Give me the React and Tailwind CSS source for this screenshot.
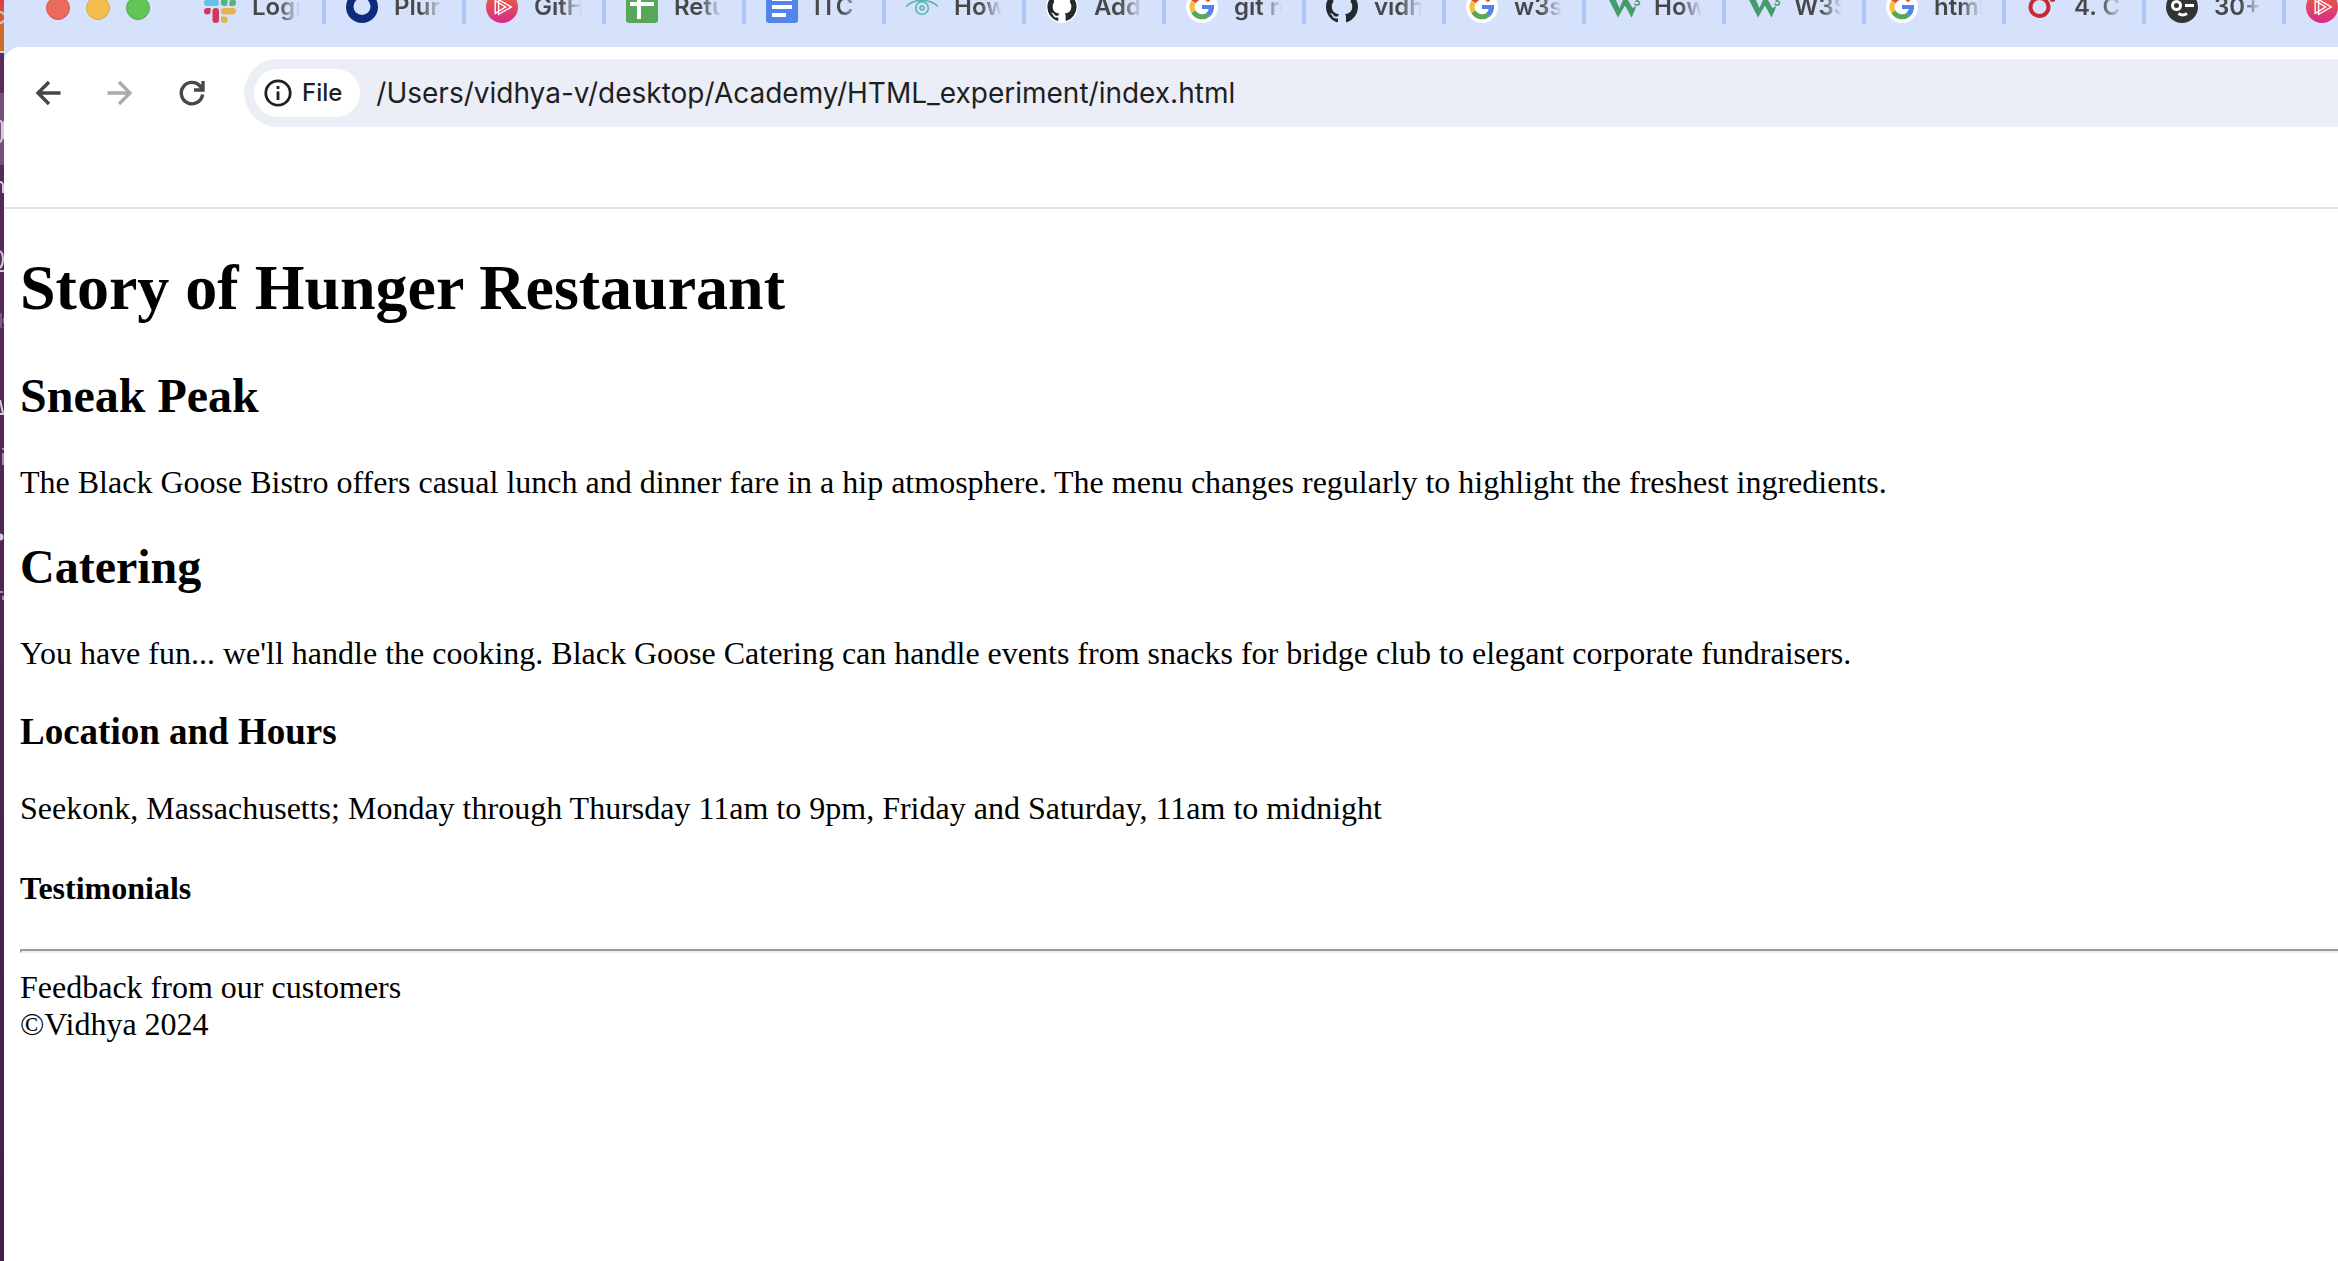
import React from "react";

const GOOGLE = (
  <svg viewBox="0 0 32 32" className="size-8">
    <circle cx="16" cy="16" r="16" fill="#fff" />
    <g fill="none" strokeWidth="5">
      <path d="M23.8 9.6A10 10 0 0 0 7.6 10.9" stroke="#dc4a3a" />
      <path d="M7.5 10.8A10 10 0 0 0 7.6 21.2" stroke="#f3be42" />
      <path d="M7.5 21A10 10 0 0 0 22.6 23.3" stroke="#58a65c" />
      <path d="M22.4 23.5A9.6 9.6 0 0 0 25.4 16" stroke="#5384ec" />
    </g>
    <path d="M16 14h12v4H16z" fill="#5384ec" />
  </svg>
);

const SLACK = (
  <svg viewBox="0 0 32 32" className="size-8">
    <g fill="#63c1ea"><rect x="0" y="8.5" width="15" height="6.5" rx="3.2" /><path d="M11.7 0A3.3 3.3 0 0 1 15 3.3v3.3h-3.3a3.3 3.3 0 0 1 0-6.6z" /></g>
    <g fill="#5ab080"><rect x="17" y="0" width="6.5" height="15" rx="3.2" /><path d="M32 11.7A3.3 3.3 0 0 1 28.7 15h-3.3v-3.3a3.3 3.3 0 0 1 6.6 0z" /></g>
    <g fill="#e3b34c"><rect x="17" y="17" width="15" height="6.5" rx="3.2" /><path d="M20.3 32a3.3 3.3 0 0 1-3.3-3.3v-3.3h3.3a3.3 3.3 0 0 1 0 6.6z" /></g>
    <g fill="#d1375d"><rect x="8.5" y="17" width="6.5" height="15" rx="3.2" /><path d="M0 20.3A3.3 3.3 0 0 1 3.3 17h3.3v3.3a3.3 3.3 0 0 1-6.6 0z" /></g>
  </svg>
);

const RING = (
  <svg viewBox="0 0 32 32" className="size-8">
    <circle cx="16" cy="16" r="16" fill="#0e2a7b" />
    <circle cx="16" cy="15.5" r="8.5" fill="#d6e1fb" />
  </svg>
);

const PLAY = (
  <svg viewBox="0 0 32 32" className="size-8">
    <defs>
      <linearGradient id="playFill" x1="0" y1="0" x2="0" y2="1">
        <stop offset="0.1" stopColor="#e8613c" />
        <stop offset="1" stopColor="#d82a8c" />
      </linearGradient>
    </defs>
    <circle cx="16" cy="16" r="16" fill="url(#playFill)" />
    <g fill="none" stroke="#fff" strokeWidth="1.4">
      <path d="M12.6 8.6 25.2 16l-12.6 7.4z" />
      <path d="M9.2 9.6 19.5 16 9.2 22.4z" />
    </g>
  </svg>
);

const SHEET = (
  <svg viewBox="0 0 32 32" className="size-8">
    <rect width="32" height="32" rx="3" fill="#58a65c" />
    <path d="M4 11h24v4H4zM11 4h4v24h-4z" fill="#fff" />
  </svg>
);

const DOC = (
  <svg viewBox="0 0 32 32" className="size-8">
    <rect width="32" height="32" rx="3" fill="#5384ec" />
    <path d="M6 6h20v4H6zM6 14h20v4H6zM6 22h14v4H6z" fill="#fff" />
  </svg>
);

const EYE = (
  <svg viewBox="0 0 32 32" className="size-8" fill="none" stroke="#54b3ac">
    <path d="M0 15.5C8 7.500 24 7.500 32 15.500" strokeWidth="1.6" />
    <circle cx="16" cy="17" r="6.3" strokeWidth="1.6" />
    <circle cx="16" cy="17" r="2" strokeWidth="1.6" />
  </svg>
);

const CAT = "M8 0C3.58 0 0 3.58 0 8c0 3.54 2.29 6.53 5.47 7.59.4.07.55-.17.55-.38 0-.19-.01-.82-.01-1.49-2.01.37-2.53-.49-2.69-.94-.09-.23-.48-.94-.82-1.13-.28-.15-.68-.52-.01-.53.63-.01 1.08.58 1.23.82.72 1.21 1.87.87 2.33.66.07-.52.28-.87.51-1.07-1.78-.2-3.64-.89-3.64-3.95 0-.87.31-1.59.82-2.15-.08-.2-.36-1.02.08-2.12 0 0 .67-.21 2.2.82.64-.18 1.32-.27 2-.27s1.36.09 2 .27c1.53-1.04 2.2-.82 2.2-.82.44 1.1.16 1.92.08 2.12.51.56.82 1.27.82 2.15 0 3.07-1.87 3.75-3.65 3.95.29.25.54.73.54 1.48 0 1.07-.01 1.93-.01 2.2 0 .21.15.46.55.38A8.01 8.01 0 0 0 16 8c0-4.42-3.58-8-8-8z";

const GITHUB_WHITE = (
  <svg viewBox="0 0 32 32" className="size-8">
    <circle cx="16" cy="16" r="16" fill="#fff" />
    <path transform="translate(1.4 1.4) scale(1.825)" d={CAT} fill="#24292e" />
  </svg>
);

const GITHUB = (
  <svg viewBox="0 0 16 16" className="size-8">
    <path d={CAT} fill="#24292e" />
  </svg>
);

const W3 = (
  <svg viewBox="0 0 32 32" className="size-8 overflow-visible">
    <path d="M1 5h7l5.500 12L17 9h5l4.500 8 3.500-2-1 4-3.500 7.500L19 14.500l-7 12z" fill="#469b6b" />
    <path d="M28.500 7H33l-2.500 3c4-.3 4 4 .500 4q-2 0-2.500-1.500" fill="none" stroke="#469b6b" strokeWidth="1.5" />
  </svg>
);

const RED = (
  <svg viewBox="0 0 32 32" className="size-8">
    <circle cx="13.500" cy="16" r="9" fill="none" stroke="#c52a35" strokeWidth="4" />
    <circle cx="26.500" cy="8" r="3" fill="#c52a35" />
  </svg>
);

const FACE = (
  <svg viewBox="0 0 32 32" className="size-8">
    <circle cx="16" cy="16" r="16" fill="#333" />
    <g fill="none" stroke="#fff" strokeWidth="3">
      <circle cx="10.500" cy="14.500" r="4" />
      <path d="M19 14.500h9" />
      <path d="M12.500 22.500q4 3 8.500 0" />
    </g>
  </svg>
);

const TABS = [
  [SLACK, "Login"],
  [RING, "Plura"],
  [PLAY, "GitHub"],
  [SHEET, "Return"],
  [DOC, "ITC I"],
  [EYE, "How t"],
  [GITHUB_WHITE, "Add a"],
  [GOOGLE, "git re"],
  [GITHUB, "vidhya"],
  [GOOGLE, "w3sch"],
  [W3, "How T"],
  [W3, "W3Sch"],
  [GOOGLE, "html e"],
  [RED, "4. Cr"],
  [FACE, "30+ H"],
  [PLAY, "GitHub"],
];

function Tab({ icon, label }) {
  return (
    <button type="button" aria-label={label} className="flex h-[33px] w-[140px] shrink-0 items-start rounded-br-xs border-r-4 border-[#aec6f6] pl-5 first:w-[142px]">
      <span className="shrink-0">{icon}</span>
      <span className="ml-4 w-12 overflow-hidden bg-linear-to-r from-[#474747] from-55% to-[#47474700] bg-clip-text text-left text-2xl leading-8 font-semibold whitespace-nowrap text-transparent">
        {label}
      </span>
    </button>
  );
}

/* Sliver of the application window that lies behind the browser. */
function Backdrop() {
  return (
    <div aria-hidden="true" className="w-1 shrink-0 overflow-hidden bg-linear-to-b from-[#5c2a62] to-[#481c4c]">
      <svg viewBox="0 0 4 640" className="h-[640px] w-1" fill="none" stroke="#d3cdd4" strokeWidth="2">
        <defs>
          <linearGradient id="tile" x1="0" y1="0" x2="0" y2="1">
            <stop offset="0" stopColor="#d9403f" />
            <stop offset="0.5" stopColor="#d2682c" />
            <stop offset="1" stopColor="#cf6c25" />
          </linearGradient>
        </defs>
        <path d="M0 0h4v51H0z" fill="url(#tile)" stroke="none" />
        <path d="M0 93h4v72H0z" fill="#764f7d" stroke="none" />
        <path d="M0 12q3 0 4 3M0 23q3 0 4-3M0 52h4" />
        <path d="M0 121q2 0 2 4v12q0 4-2 5M4 121v18" />
        <path d="M0 182q3 0 3 4v7" />
        <path d="M0 251q3 2 3 8t-3 9M0 271h4" />
        <path d="M1 313v15M4 318q-2 2 0 5t0 5" strokeWidth="1" stroke="#a48ba8" />
        <path d="M0 400l3 13M0 414h4" />
        <path d="M3 448v2M3 453v12" stroke="#a48ba8" />
        <circle cx="0" cy="537" r="3.500" fill="#d3cdd4" stroke="none" />
        <path d="M0 592h3M3 600v-4" stroke="#a48ba8" />
      </svg>
    </div>
  );
}

export default function App() {
  return (
    <div className="flex min-h-screen overflow-hidden bg-white text-black">
      <Backdrop />
      <div className="min-w-0 grow">
        <header className="bg-[#d6e1fb] font-['Inter',sans-serif]">
          <div className="flex h-[47px] items-start overflow-hidden">
            <div className="-mt-1 ml-[42px] flex shrink-0 gap-4">
              <button type="button" aria-label="Close" className="size-6 rounded-full border border-[#d8574c] bg-[#ec6a5e]" />
              <button type="button" aria-label="Minimize" className="size-6 rounded-full border border-[#dea73f] bg-[#f4be4f]" />
              <button type="button" aria-label="Zoom" className="size-6 rounded-full border border-[#52ac43] bg-[#61c554]" />
            </div>
            <nav aria-label="Tabs" className="-mt-[9px] ml-[34px] flex">
              {TABS.map(([icon, label], i) => (
                <Tab key={i} icon={icon} label={label} />
              ))}
            </nav>
          </div>
          <div className="flex h-[162px] items-start rounded-tl-2xl border-b-2 border-[#e1e1e1] bg-white pt-3">
            <div className="flex h-[68px] shrink-0 items-center gap-10 pl-7 text-[#474747]">
              <button type="button" aria-label="Back">
                <svg viewBox="0 0 32 32" className="size-8" fill="none" stroke="currentColor" strokeWidth="3.4">
                  <path d="M28.500 16H6M17 5 6 16l11 11" />
                </svg>
              </button>
              <button type="button" aria-label="Forward" className="text-[#ababab]">
                <svg viewBox="0 0 32 32" className="size-8" fill="none" stroke="currentColor" strokeWidth="3.4">
                  <path d="M3.500 16H26M15 5l11 11-11 11" />
                </svg>
              </button>
              <button type="button" aria-label="Reload">
                <svg viewBox="0 0 32 32" className="size-8" fill="none" stroke="currentColor" strokeWidth="3.4">
                  <path d="M26.600 17.500A10.700 10.700 0 1 1 24 9l3 4" />
                  <path d="M27 4v9h-9" />
                </svg>
              </button>
            </div>
            <div className="ml-9 flex h-[68px] grow items-center rounded-l-full bg-[#ebeef6] pl-[10px] text-[#1f1f1f]">
              <button type="button" className="flex h-12 shrink-0 items-center gap-[10px] rounded-full bg-white pr-[18px] pl-[10px] text-2xl font-medium">
                <svg viewBox="0 0 28 28" className="size-7" fill="none" stroke="currentColor">
                  <circle cx="14" cy="14" r="12.200" strokeWidth="2.800" />
                  <path d="M14 12.500V21M14 7v3" strokeWidth="2.800" />
                </svg>
                File
              </button>
              <input
                aria-label="Address"
                defaultValue="/Users/vidhya-v/desktop/Academy/HTML_experiment/index.html"
                className="ml-4 min-w-0 grow bg-transparent text-[28px] outline-none"
              />
            </div>
          </div>
        </header>
        <main className="pt-[42px] pl-4 font-['Liberation_Serif',serif] text-[32px] leading-[37px]">
          <h1 className="text-[64px] leading-[74px] font-bold">Story of Hunger Restaurant</h1>
          <h2 className="mt-11 text-5xl leading-[54px] font-bold">Sneak Peak</h2>
          <p className="mt-[41px]">
            The Black Goose Bistro offers casual lunch and dinner fare in a hip atmosphere. The menu changes regularly to highlight the freshest ingredients.
          </p>
          <h2 className="mt-[39px] text-5xl leading-[54px] font-bold">Catering</h2>
          <p className="mt-[41px]">
            You have fun... we'll handle the cooking. Black Goose Catering can handle events from snacks for bridge club to elegant corporate fundraisers.
          </p>
          <h3 className="mt-[38px] text-[37px] leading-[43px] font-bold">Location and Hours</h3>
          <p className="mt-[37px]">Seekonk, Massachusetts; Monday through Thursday 11am to 9pm, Friday and Saturday, 11am to midnight</p>
          <h4 className="mt-[43px] font-bold">Testimonials</h4>
          <hr className="mt-[42px] mb-4 h-1 border-t-2 border-b-2 border-l-2 border-t-[#9a9a9a] border-b-[#eeeeee] border-l-[#9a9a9a]" />
          <p>Feedback from our customers</p>
          <p>©Vidhya 2024</p>
        </main>
      </div>
    </div>
  );
}
